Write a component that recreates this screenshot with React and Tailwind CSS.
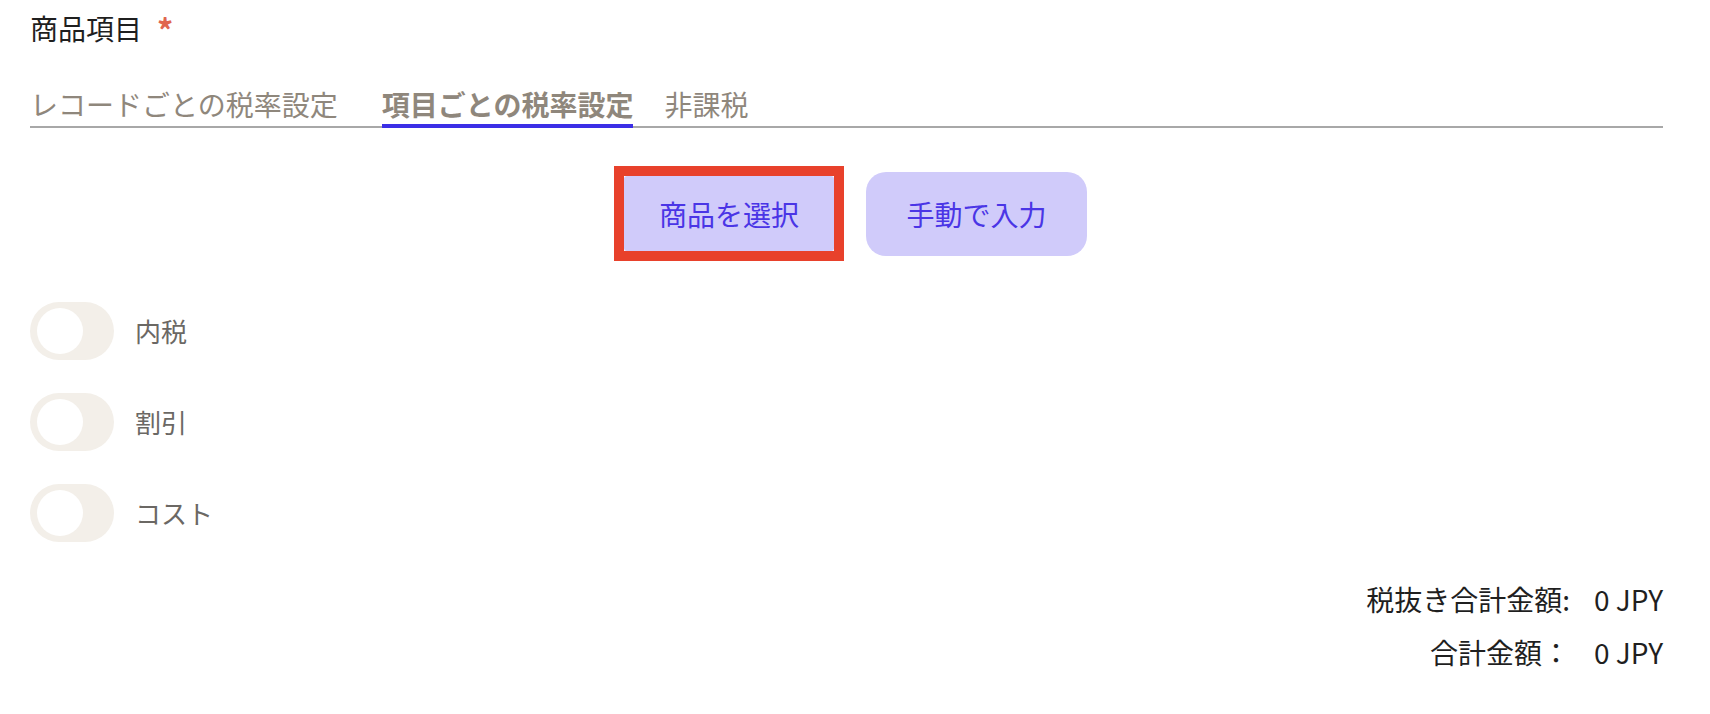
import { useState } from 'react';

const tabs = [
  { label: 'レコードごとの税率設定', gap: 'mr-[44px]' },
  { label: '項目ごとの税率設定', gap: 'mr-[31px]' },
  { label: '非課税', gap: '' },
];

const toggles = ['内税', '割引', 'コスト'];

const Toggle = ({ label }) => {
  const [on, setOn] = useState(false);
  return (
    <div className="flex items-center">
      <button
        type="button"
        onClick={() => setOn(!on)}
        className={`flex h-[58px] w-[84px] items-center rounded-full px-[7px] ${on ? 'justify-end bg-[#d0cbfa]' : 'justify-start bg-[#f3efe9]'}`}
      >
        <span className="block h-[46px] w-[46px] rounded-full bg-white" />
      </button>
      <span className="ml-[21px] text-[26px] leading-none text-[#6b6864]">{label}</span>
    </div>
  );
};

export default function App() {
  const [active, setActive] = useState(1);

  return (
    <div className="min-h-screen bg-white pl-[30px] pr-[47px] pt-[14px] font-['Noto_Sans_CJK_JP',sans-serif]">
      <div className="flex items-start text-[28px] leading-none text-[#1f1f1f]">
        <span>商品項目</span>
        <span className="ml-[15px] -mt-[1px] text-[32px] font-bold text-[#e0664e]">*</span>
      </div>

      <div className="mt-[45px] flex border-b-2 border-[#a8a8a8]">
        {tabs.map((tab, i) => (
          <button
            key={tab.label}
            type="button"
            onClick={() => setActive(i)}
            className={`${tab.gap} -mb-[2px] border-b-4 pb-[6px] text-[28px] leading-none text-[#8f877c] ${
              active === i ? 'border-[#3b2ee6] font-bold' : 'border-transparent'
            }`}
          >
            {tab.label}
          </button>
        ))}
      </div>

      <div className="mt-[38px] flex items-center justify-center gap-[22px] pl-[8px]">
        <div className="h-[95px] w-[230px] border-[10px] border-[#e8412b] bg-white">
          <button type="button" className="flex h-full w-full items-center justify-center rounded-[3px] bg-[#d0cbfa] text-[28px] leading-none text-[#4a35e6]">
            商品を選択
          </button>
        </div>
        <button type="button" className="flex h-[84px] w-[221px] items-center justify-center rounded-[20px] bg-[#d0cbfa] text-[28px] leading-none text-[#4a35e6]">
          手動で入力
        </button>
      </div>

      <div className="mt-[41px] flex flex-col gap-[33px]">
        {toggles.map((t) => (
          <Toggle key={t} label={t} />
        ))}
      </div>

      <div className="mt-[43px] flex flex-col items-end gap-[25px] text-[28px] leading-none text-[#1f1f1f]">
        <div className="flex">
          <span>税抜き合計金額:</span>
          <span className="ml-[24px]">0 JPY</span>
        </div>
        <div className="flex">
          <span>合計金額：</span>
          <span className="ml-[24px]">0 JPY</span>
        </div>
      </div>
    </div>
  );
}
